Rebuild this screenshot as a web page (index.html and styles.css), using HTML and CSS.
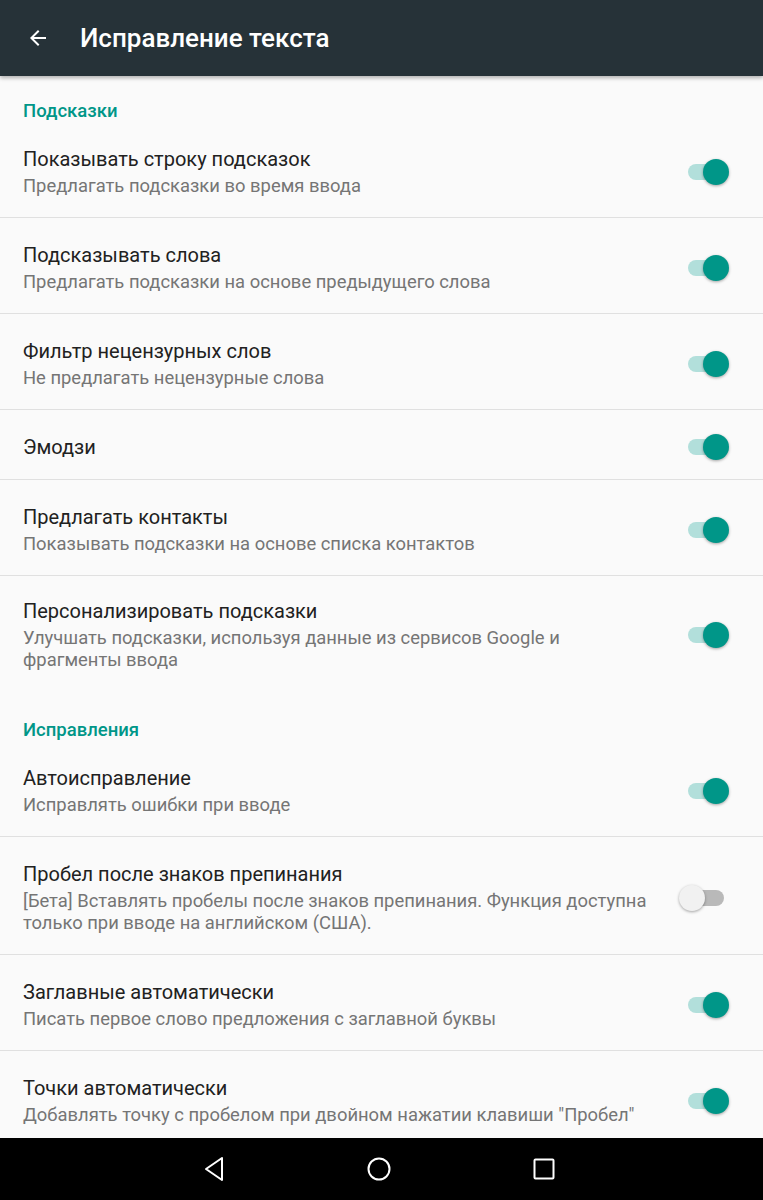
FILE: index.html
```html
<!DOCTYPE html>
<html lang="ru">
<head>
    <meta charset="UTF-8">
    <meta name="viewport" content="width=device-width, initial-scale=1.0">
    <title>Исправление текста</title>
    <link rel="stylesheet" href="styles.css">
</head>
<body>
    <div class="screen">
        <!-- Top app bar -->
        <header class="app-bar">
            <svg class="back" width="24" height="24" viewBox="0 0 24 24">
                <path d="M20 11H7.83l5.59-5.59L12 4l-8 8 8 8 1.41-1.41L7.83 13H20v-2z" fill="#fff"/>
            </svg>
            <h1>Исправление текста</h1>
        </header>

        <main class="content">
            <!-- Suggestions section -->
            <h2 class="section-title">Подсказки</h2>
            <div class="pref">
                <div class="pref-text">
                    <div class="pref-title">Показывать строку подсказок</div>
                    <div class="pref-summary">Предлагать подсказки во время ввода</div>
                </div>
                <div class="switch on"><span class="track"></span><span class="thumb"></span></div>
            </div>
            <div class="pref">
                <div class="pref-text">
                    <div class="pref-title">Подсказывать слова</div>
                    <div class="pref-summary">Предлагать подсказки на основе предыдущего слова</div>
                </div>
                <div class="switch on"><span class="track"></span><span class="thumb"></span></div>
            </div>
            <div class="pref">
                <div class="pref-text">
                    <div class="pref-title">Фильтр нецензурных слов</div>
                    <div class="pref-summary">Не предлагать нецензурные слова</div>
                </div>
                <div class="switch on"><span class="track"></span><span class="thumb"></span></div>
            </div>
            <div class="pref single">
                <div class="pref-text">
                    <div class="pref-title">Эмодзи</div>
                </div>
                <div class="switch on"><span class="track"></span><span class="thumb"></span></div>
            </div>
            <div class="pref">
                <div class="pref-text">
                    <div class="pref-title">Предлагать контакты</div>
                    <div class="pref-summary">Показывать подсказки на основе списка контактов</div>
                </div>
                <div class="switch on"><span class="track"></span><span class="thumb"></span></div>
            </div>
            <div class="pref last">
                <div class="pref-text">
                    <div class="pref-title">Персонализировать подсказки</div>
                    <div class="pref-summary">Улучшать подсказки, используя данные из сервисов Google и фрагменты ввода</div>
                </div>
                <div class="switch on"><span class="track"></span><span class="thumb"></span></div>
            </div>

            <!-- Corrections section -->
            <h2 class="section-title">Исправления</h2>
            <div class="pref">
                <div class="pref-text">
                    <div class="pref-title">Автоисправление</div>
                    <div class="pref-summary">Исправлять ошибки при вводе</div>
                </div>
                <div class="switch on"><span class="track"></span><span class="thumb"></span></div>
            </div>
            <div class="pref">
                <div class="pref-text">
                    <div class="pref-title">Пробел после знаков препинания</div>
                    <div class="pref-summary">[Бета] Вставлять пробелы после знаков препинания. Функция доступна только при вводе на английском (США).</div>
                </div>
                <div class="switch"><span class="track"></span><span class="thumb"></span></div>
            </div>
            <div class="pref">
                <div class="pref-text">
                    <div class="pref-title">Заглавные автоматически</div>
                    <div class="pref-summary">Писать первое слово предложения с заглавной буквы</div>
                </div>
                <div class="switch on"><span class="track"></span><span class="thumb"></span></div>
            </div>
            <div class="pref">
                <div class="pref-text">
                    <div class="pref-title">Точки автоматически</div>
                    <div class="pref-summary">Добавлять точку с пробелом при двойном нажатии клавиши "Пробел"</div>
                </div>
                <div class="switch on"><span class="track"></span><span class="thumb"></span></div>
            </div>
        </main>

        <!-- System navigation bar -->
        <nav class="nav-bar">
            <svg width="24" height="26" viewBox="0 0 24 26">
                <path d="M20 2L4 13l16 11z" fill="none" stroke="#fff" stroke-width="2" stroke-linejoin="round"/>
            </svg>
            <svg width="26" height="26" viewBox="0 0 26 26">
                <circle cx="13" cy="13" r="10.5" fill="none" stroke="#fff" stroke-width="2"/>
            </svg>
            <svg width="24" height="24" viewBox="0 0 24 24">
                <rect x="2.5" y="2.5" width="19" height="19" rx="1" fill="none" stroke="#fff" stroke-width="2"/>
            </svg>
        </nav>
    </div>
</body>
</html>
```

FILE: styles.css
```css
/* Base page */
body {
    margin: 0;
    font-family: Roboto, "Noto Sans", sans-serif;
    background: #fafafa;
}

.screen {
    width: 763px;
    height: 1200px;
    display: flex;
    flex-direction: column;
    overflow: hidden;
    background: #fafafa;
}

/* Top app bar */
.app-bar {
    height: 76px;
    flex-shrink: 0;
    background: #263238;
    display: flex;
    align-items: center;
    padding-left: 26px;
    box-shadow: 0 2px 4px rgba(0, 0, 0, 0.3);
    position: relative;
    z-index: 1;
}

.app-bar .back {
    margin-right: 30px;
}

.app-bar h1 {
    margin: 0;
    color: #fff;
    font-size: 26px;
    font-weight: 500;
}

/* List content */
.content {
    flex: 1;
    overflow: hidden;
}

.section-title {
    margin: 0;
    padding: 24px 23px 0;
    height: 22px;
    line-height: 22px;
    font-size: 18.5px;
    font-weight: 500;
    color: #009688;
}

.pref {
    display: flex;
    align-items: center;
    padding: 24px 34px 20px 23px;
    border-bottom: 1px solid #e0e0e0;
}

.pref.single {
    padding-bottom: 19px;
}

.pref.last {
    border-bottom: none;
    padding-top: 22px;
    padding-bottom: 24px;
}

.pref-text {
    flex: 1;
}

.pref-title {
    font-size: 20px;
    line-height: 26px;
    color: #212121;
}

.pref-summary {
    margin-top: 3px;
    font-size: 18.4px;
    line-height: 22px;
    color: #757575;
    padding-right: 10px;
}

/* Switches */
.switch {
    position: relative;
    width: 50px;
    height: 26px;
    margin-left: 16px;
    flex-shrink: 0;
}

.switch .track {
    position: absolute;
    left: 9px;
    right: 5px;
    top: 5px;
    height: 16px;
    border-radius: 8px;
    background: #b9b9b9;
}

.switch .thumb {
    position: absolute;
    top: 0;
    left: 0;
    width: 26px;
    height: 26px;
    border-radius: 50%;
    background: #f1f1f1;
    box-shadow: 0 1px 3px rgba(0, 0, 0, 0.35);
}

.switch.on .track {
    background: #b2dfdb;
}

.switch.on .thumb {
    left: auto;
    right: 0;
    background: #009688;
}

/* System navigation bar */
.nav-bar {
    height: 62px;
    flex-shrink: 0;
    background: #000;
    display: flex;
    align-items: center;
    justify-content: center;
    gap: 140px;
    padding-right: 6px;
}
```
